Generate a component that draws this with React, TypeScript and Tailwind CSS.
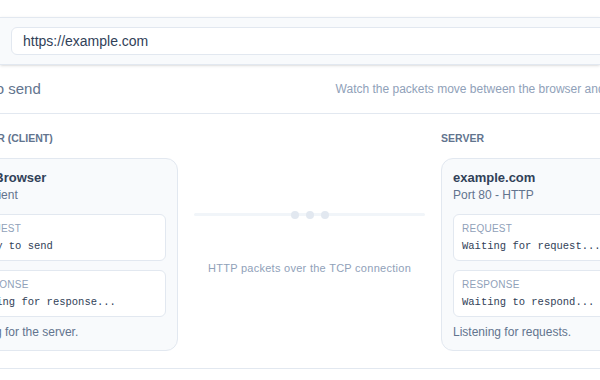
import React from "react";

type Slot = { label: string; text: string };

const Box = ({ label, text }: Slot) => (
  <div className="rounded-md border border-slate-200 bg-white px-2 pt-[7px] pb-[6px]">
    <div className="text-[10px] leading-[14px] uppercase tracking-wide text-slate-400">{label}</div>
    <div className="mt-[2px] whitespace-nowrap font-['Liberation_Mono',monospace] text-[10.5px] leading-4 text-slate-700">
      {text}
    </div>
  </div>
);

const Endpoint = ({
  heading,
  title,
  subtitle,
  request,
  response,
  footer,
  className,
}: {
  heading: string;
  title: string;
  subtitle: string;
  request: string;
  response: string;
  footer: string;
  className: string;
}) => (
  <div className={`flex shrink-0 flex-col ${className}`}>
    <div className="text-[10.5px] leading-4 font-semibold uppercase text-slate-500">{heading}</div>
    <div className="mt-3 rounded-xl border border-slate-200 bg-slate-50 px-[11px] pt-[10px] pb-[10px]">
      <div className="text-[13px] leading-[18px] font-semibold text-slate-700">{title}</div>
      <div className="text-[12px] leading-4 text-slate-500">{subtitle}</div>
      <div className="mt-[11px]">
        <Box label="Request" text={request} />
      </div>
      <div className="mt-[9px]">
        <Box label="Response" text={response} />
      </div>
      <div className="mt-[7px] whitespace-nowrap text-[12px] leading-4 text-slate-500">{footer}</div>
    </div>
  </div>
);

export default function App() {
  return (
    <div className="h-[380px] w-[600px] overflow-hidden bg-white font-['Liberation_Sans',Arial,sans-serif]">
      <div className="h-[17px]" />
      <div className="border-y border-slate-200 bg-slate-50 py-[9px] pl-[11px] shadow-sm">
        <div className="flex h-[28px] w-[700px] items-center rounded-md border border-slate-200 bg-white px-[11px] text-[14px] text-slate-700">
          https://example.com
        </div>
      </div>

      <div className="-ml-[45px] w-[709px]">
        <div className="flex h-[49px] items-center justify-between border-b border-slate-200">
          <h2 className="-ml-[11px] text-[15px] font-medium text-slate-500">Ready to send</h2>
          <p className="text-[12px] text-slate-400">Watch the packets move between the browser and the server.</p>
        </div>

        <div className="flex border-b border-slate-200 pt-[16px] pb-[17px]">
          <Endpoint
            className="-ml-[5px] w-[228px]"
            heading="Browser (client)"
            title="Your Browser"
            subtitle="Web client"
            request="Ready to send"
            response="Waiting for response..."
            footer="Waiting for the server."
          />

          <div className="flex w-[263px] shrink-0 flex-col items-center">
            <div className="mt-[83px] flex h-[3px] w-[231px] items-center justify-center gap-[7px] rounded-full bg-slate-100">
              <span className="h-2 w-2 rounded-full bg-slate-200" />
              <span className="h-2 w-2 rounded-full bg-slate-200" />
              <span className="h-2 w-2 rounded-full bg-slate-200" />
            </div>
            <div className="mt-[44px] text-[11px] leading-4 tracking-wide text-slate-400">
              HTTP packets over the TCP connection
            </div>
          </div>

          <Endpoint
            className="w-[223px]"
            heading="Server"
            title="example.com"
            subtitle="Port 80 - HTTP"
            request="Waiting for request..."
            response="Waiting to respond..."
            footer="Listening for requests."
          />
        </div>
      </div>
    </div>
  );
}
